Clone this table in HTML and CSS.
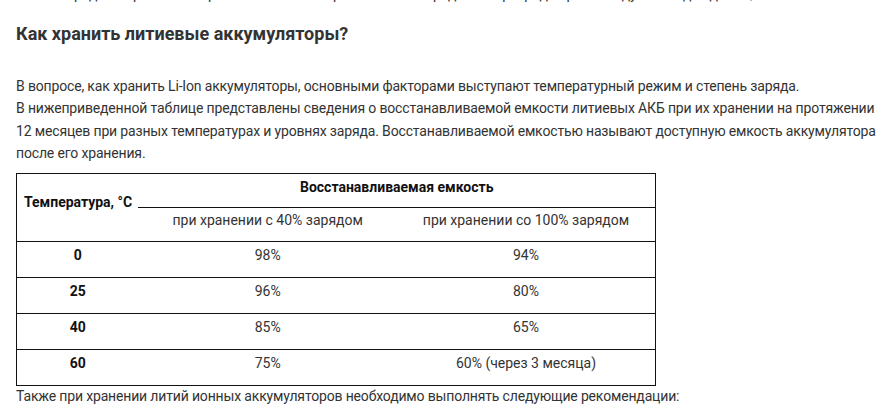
FILE: index.html
```html
<!DOCTYPE html>
<html lang="ru">
<head>
<meta charset="utf-8">
<title>Как хранить литиевые аккумуляторы?</title>
<link rel="stylesheet" href="styles.css">
</head>
<body>
<div class="article">
  <ul class="prev-list">
    <li>Перед измерением напряжения Li-Ion батареи после ее зарядки или разрядки рекомендуется подождать 1,5 часа.</li>
  </ul>
  <h2 class="title">Как хранить литиевые аккумуляторы?</h2>
  <p class="text">В вопросе, как хранить Li-Ion аккумуляторы, основными факторами выступают температурный режим и степень заряда.<br>В нижеприведенной таблице представлены сведения о восстанавливаемой емкости литиевых АКБ при их хранении на протяжении 12 месяцев при разных температурах и уровнях заряда. Восстанавливаемой емкостью называют доступную емкость аккумулятора после его хранения.</p>
  <table class="data">
    <colgroup>
      <col class="c1"><col class="c2"><col class="c3">
    </colgroup>
    <thead>
      <tr>
        <th class="temp" rowspan="2">Температура, °С</th>
        <th class="group" colspan="2">Восстанавливаемая емкость</th>
      </tr>
      <tr class="sub">
        <td>при хранении с 40% зарядом</td>
        <td>при хранении со 100% зарядом</td>
      </tr>
    </thead>
    <tbody>
      <tr><th>0</th><td>98%</td><td>94%</td></tr>
      <tr><th>25</th><td>96%</td><td>80%</td></tr>
      <tr><th>40</th><td>85%</td><td>65%</td></tr>
      <tr><th>60</th><td>75%</td><td>60% (через 3 месяца)</td></tr>
    </tbody>
  </table>
  <p class="text after">Также при хранении литий ионных аккумуляторов необходимо выполнять следующие рекомендации:</p>
</div>
</body>
</html>
```
FILE: styles.css
```css
html, body {
  margin: 0;
  padding: 0;
  background: #fff;
}
body {
  font-family: Roboto, "Liberation Sans", Arial, sans-serif;
  font-size: 14px;
  color: #333;
}
.article {
  padding: 0 10px 0 16px;
  margin-top: -17px;
}
.prev-list {
  margin: 0;
  padding-left: 41px;
  line-height: 22.4px;
  list-style: none;
  letter-spacing: -0.16px;
}
.title {
  margin: 18px 0 0;
  font-size: 18px;
  line-height: 21.6px;
  font-weight: 700;
  color: #333;
}
.text {
  margin: 30px 0 0;
  line-height: 22.4px;
  letter-spacing: -0.16px;
}
.text.after {
  margin: -1px 0 0;
  padding-top: 0;
}
.data {
  margin-top: 8px;
  width: 640px;
  border-collapse: collapse;
  border: 1px solid #111;
  font-size: 14px;
  line-height: 16px;
  color: #333;
}
.data .c1 { width: 122px; }
.data .c2 { width: 259px; }
.data .c3 { width: 259px; }
.data th {
  font-weight: 700;
  color: #111;
}
.data td, .data th {
  padding: 5px 6px 12px;
  text-align: center;
  vertical-align: top;
}
.data .temp {
  text-align: left;
  vertical-align: middle;
  padding: 0 6px 10px 7px;
}
.data .group {
  border-bottom: 1px solid #111;
}
.data .sub td {
  padding: 4px 6px 13px;
}
.data tbody tr {
  border-top: 1px solid #111;
}
.data tbody td, .data tbody th {
  padding: 5px 6px 14px;
}
```
